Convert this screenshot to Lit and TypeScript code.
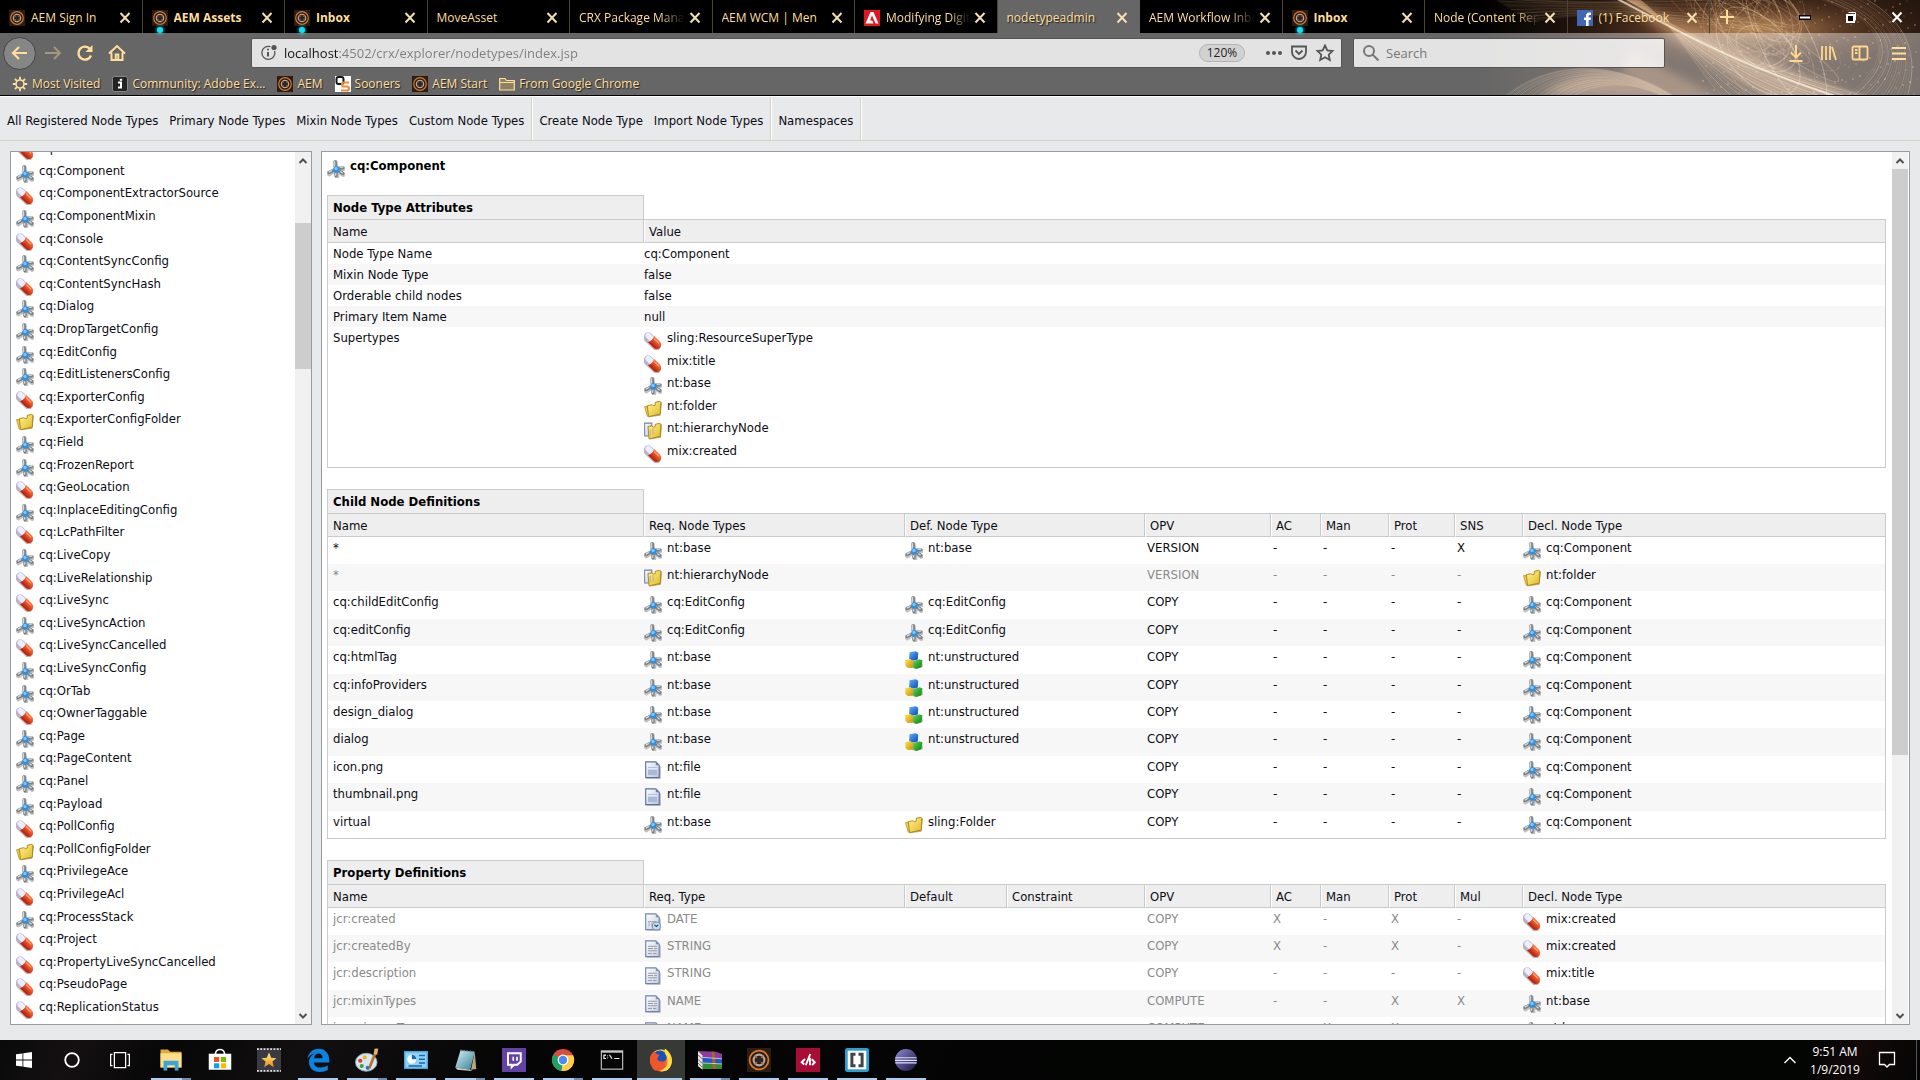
import { LitElement, html, svg, css, nothing, TemplateResult } from "lit";
import { customElement } from "lit/decorators.js";
import { classMap } from "lit/directives/class-map.js";

type Tab = { title: string; icon?: string; bold?: boolean; active?: boolean; fade?: boolean };
type Ref = { icon: string; name: string };

const TABS: Tab[] = [
  { title: "AEM Sign In", icon: "aem" },
  { title: "AEM Assets", icon: "aem", bold: true },
  { title: "Inbox", icon: "aem", bold: true },
  { title: "MoveAsset" },
  { title: "CRX Package Mana", fade: true },
  { title: "AEM WCM | Men" },
  { title: "Modifying Digit", icon: "adobe", fade: true },
  { title: "nodetypeadmin", active: true },
  { title: "AEM Workflow Inbo", fade: true },
  { title: "Inbox", icon: "aem", bold: true },
  { title: "Node (Content Rep", fade: true },
  { title: "(1) Facebook", icon: "facebook" },
];

const BOOKMARKS: Ref[] = [
  { icon: "gear", name: "Most Visited" },
  { icon: "jive", name: "Community: Adobe Ex..." },
  { icon: "aem", name: "AEM" },
  { icon: "sooners", name: "Sooners" },
  { icon: "aem", name: "AEM Start" },
  { icon: "bmfolder", name: "From Google Chrome" },
];

const MENUS = [
  ["All Registered Node Types", "Primary Node Types", "Mixin Node Types", "Custom Node Types"],
  ["Create Node Type", "Import Node Types"],
  ["Namespaces"],
];

const TYPES: [string, string][] = [
  ["pill", "Comment"], ["star", "Component"], ["pill", "ComponentExtractorSource"],
  ["star", "ComponentMixin"], ["pill", "Console"], ["star", "ContentSyncConfig"],
  ["pill", "ContentSyncHash"], ["star", "Dialog"], ["star", "DropTargetConfig"],
  ["star", "EditConfig"], ["star", "EditListenersConfig"], ["pill", "ExporterConfig"],
  ["folder", "ExporterConfigFolder"], ["star", "Field"], ["star", "FrozenReport"],
  ["pill", "GeoLocation"], ["star", "InplaceEditingConfig"], ["pill", "LcPathFilter"],
  ["star", "LiveCopy"], ["pill", "LiveRelationship"], ["pill", "LiveSync"],
  ["star", "LiveSyncAction"], ["pill", "LiveSyncCancelled"], ["star", "LiveSyncConfig"],
  ["star", "OrTab"], ["pill", "OwnerTaggable"], ["star", "Page"], ["star", "PageContent"],
  ["star", "Panel"], ["star", "Payload"], ["pill", "PollConfig"], ["folder", "PollConfigFolder"],
  ["star", "PrivilegeAce"], ["pill", "PrivilegeAcl"], ["star", "ProcessStack"],
  ["pill", "Project"], ["pill", "PropertyLiveSyncCancelled"], ["pill", "PseudoPage"],
  ["pill", "ReplicationStatus"],
];

const ATTRIBUTES: [string, string][] = [
  ["Node Type Name", "cq:Component"],
  ["Mixin Node Type", "false"],
  ["Orderable child nodes", "false"],
  ["Primary Item Name", "null"],
];

const SUPERTYPES: Ref[] = [
  { icon: "pill", name: "sling:ResourceSuperType" },
  { icon: "pill", name: "mix:title" },
  { icon: "star", name: "nt:base" },
  { icon: "folder", name: "nt:folder" },
  { icon: "hierarchy", name: "nt:hierarchyNode" },
  { icon: "pill", name: "mix:created" },
];

const BASE: Ref = { icon: "star", name: "nt:base" };
const EDIT: Ref = { icon: "star", name: "cq:EditConfig" };
const UNSTRUCTURED: Ref = { icon: "blocks", name: "nt:unstructured" };
const FILE: Ref = { icon: "file", name: "nt:file" };
const COMPONENT: Ref = { icon: "star", name: "cq:Component" };
const CREATED: Ref = { icon: "pill", name: "mix:created" };

type ChildDef = { name: string; req: Ref; def?: Ref; opv: string; sns: string; decl: Ref; inherited?: boolean };
const CHILDREN: ChildDef[] = [
  { name: "*", req: BASE, def: BASE, opv: "VERSION", sns: "X", decl: COMPONENT },
  { name: "*", req: { icon: "hierarchy", name: "nt:hierarchyNode" }, opv: "VERSION", sns: "-", decl: { icon: "folder", name: "nt:folder" }, inherited: true },
  { name: "cq:childEditConfig", req: EDIT, def: EDIT, opv: "COPY", sns: "-", decl: COMPONENT },
  { name: "cq:editConfig", req: EDIT, def: EDIT, opv: "COPY", sns: "-", decl: COMPONENT },
  { name: "cq:htmlTag", req: BASE, def: UNSTRUCTURED, opv: "COPY", sns: "-", decl: COMPONENT },
  { name: "cq:infoProviders", req: BASE, def: UNSTRUCTURED, opv: "COPY", sns: "-", decl: COMPONENT },
  { name: "design_dialog", req: BASE, def: UNSTRUCTURED, opv: "COPY", sns: "-", decl: COMPONENT },
  { name: "dialog", req: BASE, def: UNSTRUCTURED, opv: "COPY", sns: "-", decl: COMPONENT },
  { name: "icon.png", req: FILE, opv: "COPY", sns: "-", decl: COMPONENT },
  { name: "thumbnail.png", req: FILE, opv: "COPY", sns: "-", decl: COMPONENT },
  { name: "virtual", req: BASE, def: { icon: "folder", name: "sling:Folder" }, opv: "COPY", sns: "-", decl: COMPONENT },
];

type PropDef = { name: string; req: Ref; opv: string; flags: [string, string, string, string]; decl: Ref };
const PROPERTIES: PropDef[] = [
  { name: "jcr:created", req: { icon: "datefile", name: "DATE" }, opv: "COPY", flags: ["X", "-", "X", "-"], decl: CREATED },
  { name: "jcr:createdBy", req: { icon: "textfile", name: "STRING" }, opv: "COPY", flags: ["X", "-", "X", "-"], decl: CREATED },
  { name: "jcr:description", req: { icon: "textfile", name: "STRING" }, opv: "COPY", flags: ["-", "-", "-", "-"], decl: { icon: "pill", name: "mix:title" } },
  { name: "jcr:mixinTypes", req: { icon: "textfile", name: "NAME" }, opv: "COMPUTE", flags: ["-", "-", "X", "X"], decl: BASE },
  { name: "jcr:primaryType", req: { icon: "textfile", name: "NAME" }, opv: "COMPUTE", flags: ["-", "X", "X", "-"], decl: BASE },
];

type Task = { icon: string; label: string; open?: boolean; stacked?: boolean; active?: boolean };
const TASKS: Task[] = [
  { icon: "explorer", label: "File Explorer", open: true, stacked: true },
  { icon: "store", label: "Microsoft Store" },
  { icon: "movie", label: "Movie Maker" },
  { icon: "edge", label: "Microsoft Edge", open: true },
  { icon: "paint", label: "Paint", open: true, stacked: true },
  { icon: "control", label: "Control Panel", open: true },
  { icon: "notepad", label: "Notepad", open: true, stacked: true },
  { icon: "twitch", label: "Twitch", open: true },
  { icon: "chrome", label: "Google Chrome", open: true, stacked: true },
  { icon: "cmd", label: "Command Prompt", open: true },
  { icon: "firefox", label: "Firefox", open: true, active: true },
  { icon: "winrar", label: "WinRAR", open: true, stacked: true },
  { icon: "aem", label: "AEM", open: true },
  { icon: "crxde", label: "Code editor", open: true },
  { icon: "brackets", label: "Brackets", open: true },
  { icon: "eclipse", label: "Eclipse", open: true },
];

const icon = (name: string, cls = "ico") =>
  html`<svg class=${cls} viewBox="0 0 16 16" aria-hidden="true"><use href=${"#" + name}></use></svg>`;

const ref = (r?: Ref) =>
  r ? html`<span class="ref">${icon(r.icon)}<span>${r.name}</span></span>` : nothing;

const gloss = (id: string, a: string, b: string, x2 = 1, y2 = 1) => svg`
  <linearGradient id=${id} x1="0" y1="0" x2=${x2} y2=${y2}>
    <stop offset="0" stop-color=${a}></stop><stop offset="1" stop-color=${b}></stop>
  </linearGradient>`;

const SYMBOLS = html`<svg class="defs" width="0" height="0" aria-hidden="true">
  <defs>
    ${gloss("gRed", "#ff7a48", "#b41600", 0, 1)}
    ${gloss("gYellow", "#fff3a0", "#e3b81c")}
    ${gloss("gPaper", "#ffffff", "#b9c4dd")}
    ${gloss("gBlue", "#5cb0ff", "#0a48b4")}
    ${gloss("gGreen", "#5edc50", "#0a7a12")}
    ${gloss("gGold", "#ffe34a", "#c98f04")}
    ${gloss("gFox", "#ffd83a", "#e8322a", 0, 1)}
    ${gloss("gEclipse", "#8d8ad6", "#15113f")}
    ${gloss("gNote", "#d8f2f6", "#2f7f96", 1, 1)}
    ${gloss("gStar", "#fff08a", "#f08a12", 0, 1)}

    <symbol id="star" viewBox="0 0 16 16">
      <path d="M8 8.500 L2 12.500 M8.500 9 L9 14.500 M8 8 L14.500 13 M8.500 8.500 L14.500 7.800 M8 8 L7.500 2" stroke="#c4c2c0" stroke-width="4" stroke-linecap="round" fill="none"></path>
      <path d="M8 8 L1.800 11.200 M8 9 L8 14 M8 8 L14 12 M8.500 7.500 L14 7 M7.500 8 L7.300 1.700" stroke="#7d8285" stroke-width="3" stroke-linecap="round" fill="none"></path>
      <path d="M6.700 1.500 L6.700 6 M2 10.600 L5 8.800 M11.500 6.500 L14 6.200 M11 9.800 L13.500 11.400 M7.700 11 V13.500" stroke="#d4d9db" stroke-width="1.200" stroke-linecap="round"></path>
      <path d="M7 5 L9 5.500 L12 7 L10 8.500 L12.500 11 L9 10.500 L7.500 12 L6.500 9.500 L4 9.500 L6 7.500Z" fill="#2d8fe0"></path>
      <circle cx="8" cy="7.500" r="1.500" fill="#7cc6ff"></circle>
    </symbol>
    <symbol id="pill" viewBox="0 0 16 16">
      <g transform="translate(7.800 7.800) rotate(44)">
        <rect x="-8.500" y="-2.600" width="18" height="7.600" rx="3.800" fill="#a79a98" opacity=".75"></rect>
        <rect x="-9.300" y="-3.700" width="10" height="7.400" rx="3.700" fill="#b4b4da"></rect>
        <rect x="-8.600" y="-3" width="9" height="5" rx="2.500" fill="#eeeefa"></rect>
        <path d="M-2 -3.900 H5 A3.900 3.900 0 0 1 5 3.900 H-2 C-.8 1.500 -.8 -1.500 -2 -3.900Z" fill="url(#gRed)"></path>
        <path d="M0 -2.200 H5" stroke="#ff9c74" stroke-width="1.100" stroke-linecap="round"></path>
      </g>
    </symbol>
    <symbol id="folder" viewBox="0 0 16 16">
      <path d="M4 15.300 L14.500 14 L16 2.500 L14 1.500Z" fill="#8d855f" opacity=".7"></path>
      <path d="M.5 6 L2.500 5.500 L4.500 13.500 L3 14.500Z" fill="#f6dc50" stroke="#b08a10" stroke-width=".7"></path>
      <path d="M3 5 L7 4.200 L8.500 5 L10 4.500 L10 2 L14 1.200 L15 2 L14.500 12.500 L4 14.800Z" fill="url(#gYellow)" stroke="#a8820c" stroke-width=".8"></path>
    </symbol>
    <symbol id="hierarchy" viewBox="0 0 16 16">
      <path d="M5 15.600 L15 14 L16 2.500 L14 1.500Z" fill="#8d855f" opacity=".7"></path>
      <path d="M.6 1 H7 V12.500 H.6Z" fill="url(#gPaper)" stroke="#6f7fa6" stroke-width=".9"></path>
      <path d="M3.500 4 L7 3.500 L8.500 4.500 L10 4 L10 2 L14 1.200 L15 2 L14.500 12.800 L4.500 15Z" fill="url(#gYellow)" stroke="#a8820c" stroke-width=".8"></path>
      <path d="M5.500 6 V12 M8 5.500 V11" stroke="#b9b48a" stroke-width="1"></path>
    </symbol>
    <symbol id="blocks" viewBox="0 0 16 16">
      <path d="M1 8 L8 8 L15 8 L16 14 L11 16 L2 14.500Z" fill="#8b8b7b" opacity=".6"></path>
      <path d="M4 1 L9.500 .3 L11.800 1.500 L11.300 7.800 L6 8.300 L3.700 7Z" fill="url(#gBlue)"></path>
      <path d="M.3 8 L5 7.300 L7.500 9 L7 14.500 L2.500 15 L.3 13Z" fill="url(#gGold)"></path>
      <path d="M7.300 9.300 L13 7.300 L15.500 8.500 L14.500 14.500 L9.500 16 L7.300 14.200Z" fill="url(#gGreen)"></path>
    </symbol>
    <symbol id="sheet" viewBox="0 0 16 16">
      <path d="M2.500 2 H12 L15 5 V15.800 H2.500Z" fill="#8f8f95" opacity=".6"></path>
      <path d="M1.500 .8 H10.500 L13.500 3.800 V14.800 H1.500Z" fill="url(#gPaper)" stroke="#5d6f9c" stroke-width="1"></path>
      <path d="M10.500 .8 V3.800 H13.500Z" fill="#6d80b3"></path>
    </symbol>
    <symbol id="file" viewBox="0 0 16 16">
      <use href="#sheet"></use>
      <path d="M3.500 5.500 H11.500 V12.500 H3.500Z" fill="#a8b8d8"></path><path d="M3.500 7 H11.500" stroke="#fff"></path>
    </symbol>
    <symbol id="textfile" viewBox="0 0 16 16">
      <g opacity=".85"><use href="#sheet"></use>
      <path d="M3.500 5.500 H11.500 M3.500 7.500 H8 M9 7.500 H11.500 M3.500 9.500 H11.500 M3.500 12 H7 M8 12 H11" stroke="#8c8f99"></path></g>
    </symbol>
    <symbol id="datefile" viewBox="0 0 16 16">
      <g opacity=".85"><use href="#sheet"></use>
      <path d="M3.500 7.500 H11 M4.500 8 V12 M7 8 V12" stroke="#9aa2b4"></path></g>
      <circle cx="11" cy="11.500" r="3.600" fill="#bfe0f0" stroke="#7d93a6" stroke-width=".9"></circle>
      <path d="M9.300 10.500 L11 12 L12.700 10.500" stroke="#2c4256" fill="none"></path>
    </symbol>

    <symbol id="aem" viewBox="0 0 16 16">
      <rect width="16" height="16" fill="#2b1c14"></rect>
      <circle cx="8" cy="8" r="6.300" fill="none" stroke="#d9772a" stroke-width="1.200"></circle>
      <circle cx="8" cy="8" r="3.600" fill="none" stroke="#b9a79b" stroke-width="1.400"></circle>
      <path d="M5 5 L11 11 M11 5 L5 11" stroke="#8d7b70" stroke-width=".8"></path>
      <circle cx="8" cy="8" r="2" fill="#35241b"></circle>
    </symbol>
    <symbol id="adobe" viewBox="0 0 16 16">
      <rect width="16" height="16" fill="#e3161f"></rect>
      <path d="M1.500 13.500 L6.500 2 H9.500 L14.500 13.500 H11.500 L8 5.500 L6 10.500 H8.300 L9.500 13.500Z" fill="#fff"></path>
    </symbol>
    <symbol id="facebook" viewBox="0 0 16 16">
      <rect width="16" height="16" fill="#4267b2"></rect>
      <path d="M9 16 V10 H7 V7.500 H9 V6 C9 3.700 10.200 2.500 12.300 2.500 H14 V5 H12.800 C11.900 5 11.600 5.400 11.600 6.200 V7.500 H14 L13.600 10 H11.600 V16Z" fill="#fff"></path>
    </symbol>
    <symbol id="gear" viewBox="0 0 16 16">
      <circle cx="8" cy="8" r="4" fill="none" stroke="#ffdf9b" stroke-width="1.600"></circle>
      <path d="M8 .8 V4 M8 12 V15.200 M.8 8 H4 M12 8 H15.200 M2.900 2.900 L5.200 5.200 M10.800 10.800 L13.100 13.100 M13.100 2.900 L10.800 5.200 M5.200 10.800 L2.900 13.100" stroke="#ffdf9b" stroke-width="1.800"></path>
    </symbol>
    <symbol id="jive" viewBox="0 0 16 16">
      <rect x=".5" y=".5" width="15" height="15" rx="2" fill="#222" stroke="#888"></rect>
      <path d="M6 6.500 H9 V11.500 H6" stroke="#fff" stroke-width="2" fill="none"></path><rect x="7.800" y="2.800" width="2.400" height="2" fill="#fff"></rect>
    </symbol>
    <symbol id="sooners" viewBox="0 0 16 16">
      <rect width="16" height="16" fill="#fff"></rect>
      <rect x="1.500" y="1" width="7" height="7" rx="2" fill="none" stroke="#151515" stroke-width="2"></rect>
      <path d="M14 6.500 H8.500 C6.500 6.500 6.500 10.500 8.500 10.500 H12 C14.500 10.500 14.500 14.500 12 14.500 H6" fill="none" stroke="#f0883a" stroke-width="2.200"></path>
    </symbol>
    <symbol id="bmfolder" viewBox="0 0 16 16">
      <path d="M.7 2.500 H6 L7.500 4.500 H15.300 V14 H.7Z M.7 6.500 H15.300" fill="#8c8062" stroke="#ffdf9b" stroke-width="1.200"></path>
    </symbol>

    <symbol id="windows" viewBox="0 0 16 16">
      <path d="M0 2.300 L6.500 1.400 V7.600 H0Z M7.300 1.300 L16 0 V7.600 H7.300Z M0 8.400 H6.500 V14.600 L0 13.700Z M7.300 8.400 H16 V16 L7.300 14.700Z" fill="#fff"></path>
    </symbol>
    <symbol id="cortana" viewBox="0 0 16 16"><circle cx="8" cy="8" r="6.800" fill="none" stroke="#fff" stroke-width="1.800"></circle></symbol>
    <symbol id="taskview" viewBox="0 0 16 16">
      <path d="M3.500 2 H12.500 V14 H3.500Z M2 3.500 H.5 V12.500 H2 M14 3.500 H15.500 V12.500 H14" fill="none" stroke="#fff"></path>
    </symbol>
    <symbol id="explorer" viewBox="0 0 16 16">
      <path d="M1 1 H6 L7.500 2.500 H15 V13 H1Z" fill="#e0a93a"></path><path d="M1 3.500 H15 V13 H1Z" fill="#ffe08a"></path>
      <path d="M3 15 V8.500 H13 V15 H10.500 V11.500 H5.500 V15Z" fill="#3aa5dc"></path>
    </symbol>
    <symbol id="store" viewBox="0 0 16 16">
      <path d="M5 4 C5 0 11 0 11 4" fill="none" stroke="#fff" stroke-width="1.100"></path><path d="M.5 3.800 H15.500 V14.500 H.5Z" fill="#fff"></path>
      <path d="M4 6 H7.500 V9.300 H4Z" fill="#f25022"></path><path d="M8.500 6 H12 V9.300 H8.500Z" fill="#7fba00"></path>
      <path d="M4 10.200 H7.500 V13.500 H4Z" fill="#00a4ef"></path><path d="M8.500 10.200 H12 V13.500 H8.500Z" fill="#ffb900"></path>
    </symbol>
    <symbol id="movie" viewBox="0 0 16 16">
      <rect width="16" height="16" fill="#3a3b42"></rect>
      <path d="M0 .7 H16 M0 15.300 H16" stroke="#ddd" stroke-width="1.200" stroke-dasharray="1.200 1"></path>
      <path d="M8 3 L9.500 6.500 L13 6.800 L10.300 9 L11.200 12.800 L8 10.700 L4.800 12.800 L5.700 9 L3 6.800 L6.500 6.500Z" fill="url(#gStar)"></path>
    </symbol>
    <symbol id="edge" viewBox="0 0 16 16">
      <path d="M1 7.300 C1.600 3 4.500 .5 8.500 .5 C13 .5 15.500 3.800 15.500 8 V9.600 H5.200 C5.400 12 7.400 13 9.800 13 C11.600 13 13.200 12.500 14.500 11.700 V14.700 C13 15.500 11.200 16 9.300 16 C4.800 16 2 13.200 2 9.500 C2 7 3.500 4.800 6 3.700 C4 3.800 2.200 5.200 1 7.300Z M5.400 6.800 H11 C11 4.900 10 3.700 8.400 3.700 C6.700 3.700 5.700 5 5.400 6.800Z" fill="#0a84e0" fill-rule="evenodd"></path>
    </symbol>
    <symbol id="paint" viewBox="0 0 16 16">
      <ellipse cx="7.500" cy="9.500" rx="7.200" ry="6" fill="#d8e6f2" stroke="#8fa8bd" stroke-width=".6"></ellipse>
      <circle cx="3.500" cy="8.500" r="1.400" fill="#d93a2b"></circle><circle cx="6.500" cy="6.300" r="1.400" fill="#f2b320"></circle>
      <circle cx="4.500" cy="12" r="1.400" fill="#3f9f3a"></circle><circle cx="8.500" cy="13.200" r="1.400" fill="#2f72c4"></circle>
      <path d="M13.500 3.500 L9.500 13.500" stroke="#b5702c" stroke-width="1.800"></path><path d="M12.500 4 L13 .5 L15.500 .3 L14.800 4.500Z" fill="#e5b076"></path>
    </symbol>
    <symbol id="control" viewBox="0 0 16 16">
      <rect x="0" y="2" width="16" height="12" fill="#4aa9e0"></rect><rect x="1" y="3" width="14" height="10" fill="#8fd2f5"></rect>
      <circle cx="5.200" cy="7.500" r="3" fill="#fff"></circle><path d="M5.200 7.500 V4.500 A3 3 0 0 1 8.200 7.500Z" fill="#1a68b0"></path>
      <path d="M10 5 H14 M10 7.500 H14 M10 10 H14 M3 12 H12" stroke="#1a68b0"></path>
    </symbol>
    <symbol id="notepad" viewBox="0 0 16 16">
      <path d="M5 1.500 L14.500 2.500 L11.500 14.500 L1.500 13Z" fill="url(#gNote)"></path><path d="M1.500 13 L11.500 14.500 L13 15.300 L3 14.500Z" fill="#d8d4c8"></path>
      <path d="M14.500 2.500 L15.500 14 L12 14.500Z" fill="#b8a77a"></path><path d="M5 1.500 L14.500 2.500" stroke="#777" stroke-dasharray="1 1"></path>
    </symbol>
    <symbol id="twitch" viewBox="0 0 16 16">
      <rect width="16" height="16" fill="#6441a4"></rect>
      <path d="M4 3.500 H12.500 V9 L10.200 11.200 H8 L6.400 12.800 V11.200 H4Z" fill="none" stroke="#fff" stroke-width="1.300"></path><path d="M7.500 5.800 V8.500 M10 5.800 V8.500" stroke="#fff" stroke-width="1.100"></path>
    </symbol>
    <symbol id="chrome" viewBox="0 0 16 16">
      <circle cx="8" cy="8" r="7.400" fill="#dd4b3e"></circle>
      <path d="M8 8 L1.600 4.300 A7.400 7.400 0 0 0 7 15.300Z" fill="#1da261"></path><path d="M8 8 L7 15.300 A7.400 7.400 0 0 0 14.700 4.800 L8 4.800Z" fill="#ffcd46"></path>
      <circle cx="8" cy="8" r="3.600" fill="#fff"></circle><circle cx="8" cy="8" r="2.800" fill="#4a8af4"></circle>
    </symbol>
    <symbol id="cmd" viewBox="0 0 16 16">
      <rect x=".9" y="1.900" width="14.200" height="12.200" fill="#050505" stroke="#b9b9b9" stroke-width=".8"></rect><path d="M.9 2.600 H15.100" stroke="#ddd"></path>
      <path d="M4 4.800 H2.600 V7 H4 M5 5 V5.500 M5 6.400 V6.900 M6.300 4.500 L8 7.200 M9.500 7 H13" stroke="#eee" stroke-width=".8" fill="none"></path>
    </symbol>
    <symbol id="firefox" viewBox="0 0 16 16">
      <circle cx="8" cy="8.300" r="7.300" fill="url(#gFox)"></circle>
      <circle cx="7.200" cy="6.200" r="4.600" fill="#1a4fc0"></circle>
      <path d="M1.300 4.500 C2 3.500 2.500 3 3.500 2.500 C4 3.500 5 4.200 7 4.500 L5.500 7 C5.800 9.500 9.500 9.500 11 8 C11.500 11 8.500 12.500 6 12 C8 14 12 13 13 10 L12 15 H4 C1 13 0 8 1.300 4.500Z" fill="#f0562a"></path>
      <path d="M10.500 .3 C16 3.500 16.800 11 12.500 14.500 C10.500 15.800 8 15.800 6.500 15.300 C11.500 14.500 14.500 9 10.800 4Z" fill="#ffdc46"></path>
    </symbol>
    <symbol id="winrar" viewBox="0 0 16 16">
      <path d="M0 2 L12 2.500 L16 4 V7 L3 6Z" fill="#8e3aa0"></path><path d="M0 6 L3 6 L16 7 V10.500 L3 10 L0 9Z" fill="#2757c4"></path><path d="M0 9.500 L3 10 L16 10.700 V14 L3 14 L0 12Z" fill="#2f8f32"></path>
      <path d="M0 2 L3 5 V14.500 L0 12Z" fill="#e9e4dc"></path><path d="M0 4.500 L3 7.500 M0 7.500 L3 10.500 M0 10 L3 13" stroke="#6a5a50" stroke-width=".6"></path>
      <path d="M9 2.500 L11 2.500 L12 14 H10Z" fill="#a8642a"></path><path d="M3 6.200 L16 7.200 M3 10 L16 10.600" stroke="#eee" stroke-width=".5"></path>
    </symbol>
    <symbol id="crxde" viewBox="0 0 16 16">
      <rect width="16" height="16" fill="#a90d35"></rect>
      <path d="M6 7.300 L3.800 9.500 L5.500 11 M9.500 4 L6.500 11.500 M9.300 6.500 V11.500 M10.500 7.500 L12.500 9.500 L10.700 11.300" stroke="#fff" stroke-width="1.300" fill="none"></path>
    </symbol>
    <symbol id="brackets" viewBox="0 0 16 16">
      <rect width="16" height="16" rx="1.500" fill="#2a9fd2"></rect><rect x="1.800" y="1.800" width="12.400" height="12.400" fill="#fff"></rect>
      <path d="M7 4.200 H4.600 V11.800 H7 M9 4.200 H11.400 V11.800 H9" stroke="#444" stroke-width="2" fill="none"></path>
    </symbol>
    <symbol id="eclipse" viewBox="0 0 16 16">
      <circle cx="8" cy="8" r="7.300" fill="url(#gEclipse)"></circle><path d="M.9 6.500 H15.100 M.7 8.200 H15.300 M.9 9.900 H15.100" stroke="#dcdcf5" stroke-width=".8"></path>
    </symbol>
  </defs>
</svg>`;

/** Glowing strands of the browser theme: fans of curves around a bright focus. */
function strands(): TemplateResult[] {
  const out: TemplateResult[] = [];
  const tones = ["#e9bf8c", "#a9744c", "#fff0cf", "#8a5a3a", "#caa078"];
  for (let i = 0; i < 46; i++) {
    const t = i / 45;
    const d = `M${120 + t * 30} ${-14 + t * 6} C${190 + t * 14} ${22 + t * 8} ${240 - t * 30} ${58 + t * 8} ${420 - t * 170} 104`;
    out.push(svg`<path d=${d} stroke=${tones[i % 5]} stroke-opacity=${0.14 + (i % 4) * 0.09}></path>`);
  }
  for (let i = 0; i < 22; i++) {
    const t = i / 21;
    const d = `M${10 + t * 40} ${-4 + t * 26} C${90 + t * 20} ${2 + t * 12} ${130} ${4 + t * 4} ${250 + t * 90} ${-6 + t * 50}`;
    out.push(svg`<path d=${d} stroke=${tones[(i + 3) % 5]} stroke-opacity=${0.08 + (i % 3) * 0.07}></path>`);
  }
  for (let i = 0; i < 46; i++) {
    const a = i * 0.37;
    const rx = 18 + (i % 9) * 7;
    const ry = 10 + (i % 7) * 5;
    out.push(svg`<ellipse cx=${272 + Math.cos(a) * 30} cy=${24 + Math.sin(a * 1.7) * 18} rx=${rx} ry=${ry}
      transform=${`rotate(${20 + ((i * 29) % 50)} 275 28)`} stroke=${tones[i % 5]} stroke-opacity=${0.12 + (i % 3) * 0.1}></ellipse>`);
  }
  for (let i = 0; i < 18; i++) {
    const t = i / 17;
    const d = `M${330 + t * 50} -4 C${410 + t * 30} ${20 + t * 6} ${420 + t * 16} ${60 + t * 10} ${360 + t * 66} 100`;
    out.push(svg`<path d=${d} stroke=${tones[i % 5]} stroke-opacity=${0.12 + (i % 3) * 0.08}></path>`);
  }
  for (let i = 0; i < 30; i++) {
    const t = i / 29;
    const d = `M${20 + t * 70} 100 C${70 + t * 40} ${56 + t * 24} ${140 + t * 20} ${60 + t * 20} ${200 - t * 12} 100`;
    out.push(svg`<path d=${d} stroke=${tones[(i + 1) % 5]} stroke-opacity=".24"></path>`);
  }
  for (let i = 0; i < 220; i++) {
    const x = 220 + ((i * 73) % 218);
    const y = (i * 41) % 96;
    out.push(svg`<circle cx=${x} cy=${y} r=".8" fill="#ffe2ae" stroke="none" opacity=${0.15 + (i % 5) * 0.1}></circle>`);
  }
  return out;
}

@customElement("app-root")
export class AppRoot extends LitElement {
  static styles = css`
    :host {
      display: flex;
      flex-direction: column;
      height: 100vh;
      overflow: hidden;
      background: #e7e9eb;
      color: #0c0c14;
      font: 13px/22px "DejaVu Sans Condensed", "DejaVu Sans", Tahoma, sans-serif;
    }
    * { box-sizing: border-box; }
    button, input { font: inherit; color: inherit; border: 0; margin: 0; padding: 0; background: none; }
    a { color: inherit; text-decoration: none; }
    h1, h2, ul { margin: 0; padding: 0; list-style: none; font-size: 13px; }
    .defs { position: absolute; }
    .ico { width: 18px; height: 18px; flex: none; }
    .ico16 { width: 16px; height: 16px; flex: none; display: block; }
    .ico20 { width: 20px; height: 20px; flex: none; display: block; }
    .ico24 { width: 24px; height: 24px; flex: none; display: block; }

    /* browser chrome */
    .chrome {
      position: relative;
      flex: none;
      background: #000;
      border-bottom: 1px solid #000;
      color: #ffdf9b;
      font-family: "Open Sans", "Noto Sans", sans-serif;
      font-size: 12px;
    }
    .theme { position: absolute; right: 0; top: 0; width: 440px; height: 100%; }
    .bar { position: relative; display: flex; align-items: center; }
    .tabs { height: 33px; }
    .tab {
      flex: 1 1 0;
      min-width: 0;
      height: 33px;
      display: flex;
      align-items: center;
      gap: 6px;
      padding: 2px 9px 0;
      border-right: 1px solid #4a4336;
      position: relative;
    }
    .tab.active { background: #666; border-color: transparent; text-shadow: 1px 1px 1px #222; }
    .tab.bold { font-weight: 700; }
    .tab.bold::after {
      content: "";
      position: absolute;
      left: 14px;
      bottom: 0;
      width: 6px;
      height: 6px;
      border-radius: 50%;
      background: #12dff0;
      box-shadow: 0 0 3px 1px #0a7f94;
    }
    .label { flex: 1; min-width: 0; overflow: hidden; white-space: nowrap; margin-right: -4px; }
    .label.fade { mask-image: linear-gradient(to right, #000 75%, transparent); }
    .close { width: 16px; height: 16px; flex: none; }
    .close svg { display: block; }
    .tabend { display: flex; align-items: center; justify-content: space-between; width: 210px; flex: none; padding: 0 14px 0 8px; color: #fff; }
    .wins { display: flex; gap: 28px; }
    .wins button, .tabend button { height: 18px; }
    .toolbars { position: relative; background: rgba(255, 255, 255, 0.4); }
    .nav { height: 40px; padding: 0 12px 0 3px; }
    .back {
      width: 33px;
      height: 33px;
      border-radius: 50%;
      background: #868686;
      border: 1px solid #444;
      display: grid;
      place-items: center;
    }
    .navbtns { display: flex; align-items: center; gap: 12px; width: 248px; }
    .navbtns .back { margin-right: -5px; }
    .navbtns svg, .right svg { display: block; }
    .field {
      height: 30px;
      display: flex;
      align-items: center;
      background: rgba(255, 255, 255, 0.82);
      border: 1px solid #555;
      border-radius: 2px;
      color: #555;
      font-size: 13px;
    }
    .urlbox { flex: 1; padding: 0 6px 0 8px; gap: 6px; }
    .url {
      flex: 1;
      min-width: 0;
      color: transparent;
      background: linear-gradient(to right, #111 54px, #7c7c7c 54px);
      background-clip: text;
      -webkit-background-clip: text;
    }
    .zoom {
      width: 46px;
      height: 18px;
      border: 1px solid #b3b3b3;
      border-radius: 9px;
      background: #d2d2d2;
      color: #222;
      font-size: 12px;
      line-height: 14px;
      margin-right: 14px;
    }
    .urlbox button svg { display: block; }
    .search { width: 312px; margin: 0 122px 0 11px; padding: 0 8px; gap: 6px; }
    .search input { flex: 1; min-width: 0; }
    .search input::placeholder { color: #777; opacity: 1; }
    .right { display: flex; align-items: center; gap: 14px; }
    .split { width: 1px; height: 28px; background: #94816a; margin: 0 -4px; }
    .marks { height: 22px; padding: 0 0 0 12px; gap: 12px; text-shadow: 1px 1px 1px #222; }
    .mark { display: flex; align-items: center; gap: 4px; line-height: 22px; }

    /* explorer toolbar */
    .menu { flex: none; height: 45px; display: flex; border-bottom: 1px solid #d5d1c6; border-top: 1px solid #fff; }
    .group { display: flex; align-items: center; gap: 11px; padding: 4px 7px 0; border-right: 1px solid #d5d1c6; box-shadow: 1px 0 0 #fff; }

    /* panes */
    .panes { flex: 1; min-height: 0; display: flex; gap: 9px; padding: 10px 10px 15px; }
    .pane { background: #fff; border: 1px solid #999c9f; display: flex; min-height: 0; overflow: hidden; }
    .side { width: 302px; flex: none; }
    .main { flex: 1; min-width: 0; }
    .scrollbar { width: 16px; flex: none; background: #f1f1f1; display: flex; flex-direction: column; align-items: center; }
    .main .scrollbar { margin-right: 1px; }
    .scrollbar svg { flex: none; height: 17px; width: 16px; }
    .track { flex: 1; width: 100%; display: flex; flex-direction: column; }
    .thumb { background: #cdcdcd; }
    .side .thumb { flex: 146; }
    .side .pre { flex: 54; }
    .side .post { flex: 638; }
    .main .thumb { flex: 586; }
    .main .post { flex: 252; }
    .types { flex: 1; min-width: 0; margin-top: -15px; padding-left: 5px; }
    .types li { height: 23px; overflow: visible; }
    .types li:nth-child(5n + 2), .types li:nth-child(5n) { height: 22px; }
    .ref { display: flex; gap: 5px; line-height: 22px; color: #0c0c14; white-space: nowrap; }
    .ref.dim, .dim { color: #8a8a8a; }
    .ref .ico { margin-top: 5px; }

    .content { flex: 1; min-width: 0; padding: 3px 6px 0 5px; }
    h1 .ref { font-weight: 700; color: #000; }
    h1 { height: 40px; }
    section { margin-bottom: 21px; }
    h2 { width: 317px; height: 24px; line-height: 23px; padding: 0 5px; background: #eee; border: 1px solid #c9cacb; border-bottom: 0; color: #000; }
    table { width: 100%; table-layout: fixed; border-spacing: 0; border: 1px solid #c9cacb; }
    th {
      height: 23px;
      line-height: 21px;
      padding: 1px 0 0 4px;
      font-weight: 400;
      text-align: left;
      background: #eee;
      border-right: 1px solid #c9cacb;
      border-left: 1px solid #fff;
      border-bottom: 1px solid #c9cacb;
    }
    th:first-child { border-left: 0; padding-left: 5px; }
    th:last-child { border-right: 0; }
    td { padding: 0 0 0 2px; height: 27px; vertical-align: top; overflow: hidden; white-space: nowrap; }
    td:first-child { padding-left: 5px; }
    td.reft { padding-left: 0; }
    tbody tr:nth-child(even) td { background: #f7f7f7; }
    .defsrows tr:nth-child(5n + 3) td, .defsrows tr:nth-child(5n) td { height: 28px; }
    .attrs td { height: 21px; line-height: 22px; }
    .attrs td > .line { height: 21px; }
    .attrs .last td { padding-bottom: 5px; background: #fff; }
    .supers li { height: 22px; }
    .supers li:nth-child(odd) { height: 23px; }
    .c-name { width: 316px; }
    .c-req { width: 261px; }
    .c-def { width: 240px; }
    .c-half { width: 102px; }
    .c-con { width: 138px; }
    .c-opv { width: 126px; }
    .c-ac { width: 50px; }
    .c-man { width: 68px; }
    .c-prot { width: 66px; }
    .c-sns { width: 68px; }

    /* taskbar */
    .taskbar {
      flex: none;
      height: 40px;
      display: flex;
      color: #fff;
      background: linear-gradient(115deg, #0a0a0a 0, #141012 4%, #070707 9%, #120f10 16%, #040504 28%, #030503 94%, #130909 96%, #050505 100%);
      font: 12px/18px "Open Sans", "Noto Sans", sans-serif;
    }
    .sys { width: 48px; display: grid; place-items: center; }
    .tasks { display: flex; gap: 1px; flex: 1; padding-left: 3px; }
    .task { width: 48px; display: grid; place-items: center; position: relative; }
    .task.active { background: #373936; }
    .task.open::after { content: ""; position: absolute; left: 4px; right: 4px; bottom: 0; height: 2px; background: #a9cdf3; }
    .task.active::after { left: 0; right: 3px; }
    .task.stacked::after { background: linear-gradient(to right, #a9cdf3 31px, #6f8fb0 31px); }
    .tray { display: flex; align-items: center; gap: 12px; padding-right: 3px; }
    .clock { text-align: center; line-height: 18px; width: 52px; margin-right: 5px; padding-top: 1px; white-space: nowrap; }
    .peek { width: 1px; height: 40px; background: #555; margin-left: 8px; }
  `;

  private renderTab(t: Tab) {
    return html`<div class=${classMap({ tab: true, active: !!t.active, bold: !!t.bold })} role="tab" aria-selected=${t.active ? "true" : "false"}>
      ${t.icon ? icon(t.icon, "ico16") : nothing}
      <span class=${classMap({ label: true, fade: !!t.fade })}>${t.title}</span>
      <button class="close" aria-label=${"Close " + t.title}>
        <svg width="16" height="16" fill="none" stroke="#f3dfb0" stroke-width="2"><path d="M3.500 3 L12.500 12.500 M12.500 3 L3.500 12.500"></path></svg>
      </button>
    </div>`;
  }

  private renderChrome() {
    return html`<header class="chrome">
      <svg class="theme" viewBox="0 0 440 96" preserveAspectRatio="xMaxYMin slice" fill="none" aria-hidden="true">
        <defs>
          <radialGradient id="glow" cx=".62" cy=".3" r=".5">
            <stop offset="0" stop-color="#bd8e5c"></stop><stop offset=".4" stop-color="#5e3c26"></stop><stop offset="1" stop-color="#1a0e08" stop-opacity="0"></stop>
          </radialGradient>
          <linearGradient id="floor" x1="0" y1="0" x2="1" y2="0">
            <stop offset="0" stop-color="#3a2618" stop-opacity="0"></stop><stop offset=".3" stop-color="#2c1b11"></stop><stop offset=".6" stop-color="#4a3020"></stop><stop offset="1" stop-color="#2e1c12"></stop>
          </linearGradient>
          <filter id="haze" x="-20%" y="-20%" width="140%" height="140%"><feGaussianBlur stdDeviation="5"></feGaussianBlur></filter>
        </defs>
        <rect width="440" height="96" fill="url(#floor)" opacity=".8"></rect>
        <rect width="440" height="96" fill="url(#glow)"></rect>
        <g filter="url(#haze)">
          <path d="M130 -6 L200 20 L390 104 L300 104 L180 30Z" fill="#c89a72" opacity=".6"></path>
          <path d="M150 50 L250 104 L190 104 L140 70Z" fill="#9a6e50" opacity=".6"></path>
          <path d="M60 96 C100 66 140 66 190 100Z" fill="#a87c5c" opacity=".7"></path>
        </g>
        ${strands()}
        <path d="M128 -6 C190 26 250 64 380 104" stroke="#fff2d6" stroke-width="2" opacity=".7"></path>
      </svg>
      <div class="bar tabs" role="tablist">
        ${TABS.map((t) => this.renderTab(t))}
        <div class="tabend">
          <button aria-label="New tab"><svg width="18" height="18" stroke="#ffdf9b" stroke-width="2"><path d="M9 2 V16 M2 9 H16"></path></svg></button>
          <div class="wins">
            <button aria-label="Minimize"><svg width="18" height="18"><path d="M3 9.500 H15" stroke="#000" stroke-width="5"></path><path d="M4 9.500 H14" stroke="#fff" stroke-width="2"></path></svg></button>
            <button aria-label="Restore"><svg width="18" height="18" fill="none"><path d="M6.500 4.500 H13.500 V12.500" stroke="#fff" stroke-width="1"></path><rect x="5" y="7" width="7" height="7" stroke="#fff" stroke-width="2" fill="#000"></rect></svg></button>
            <button aria-label="Close window"><svg width="18" height="18" stroke="#fff" stroke-width="2"><path d="M4.500 4.500 L13.500 14 M13.500 4.500 L4.500 14"></path></svg></button>
          </div>
        </div>
      </div>
      <div class="toolbars">
        <div class="bar nav">
          <div class="navbtns">
            <button class="back" aria-label="Back"><svg width="20" height="20" fill="none" stroke="#ffdf9b" stroke-width="2.200"><path d="M17 10 H3 M9 4 L3 10 L9 16"></path></svg></button>
            <button aria-label="Forward"><svg width="20" height="20" fill="none" stroke="#a59878" stroke-width="2"><path d="M2 10 H17 M11 4 L17 10 L11 16"></path></svg></button>
            <button aria-label="Reload"><svg width="20" height="20" fill="none" stroke="#ffdf9b" stroke-width="2.400"><path d="M16 12.500 A6.500 6.500 0 1 1 14.500 5.500"></path><path d="M17.500 2 V9 H10.500Z" fill="#ffdf9b" stroke="none"></path></svg></button>
            <button aria-label="Home"><svg width="20" height="20" fill="none" stroke="#ffdf9b" stroke-width="2"><path d="M2 10.500 L10 3 L18 10.500 M4.500 9.500 V17 H15.500 V9.500"></path><path d="M8.700 17 V11.500 H11.300 V17"></path></svg></button>
          </div>
          <div class="field urlbox">
            <svg width="18" height="18" fill="none" stroke="#555" stroke-width="1.300" aria-hidden="true"><path d="M10.500 2.700 A6.500 6.500 0 1 0 14.600 7"></path><path d="M8 8 V12.500" stroke-width="2"></path><circle cx="8" cy="5.500" r="1" fill="#555" stroke="none"></circle><circle cx="14" cy="3.500" r="2.600" fill="#555" stroke="none"></circle></svg>
            <input class="url" type="text" aria-label="Address" .value=${"localhost:4502/crx/explorer/nodetypes/index.jsp"} />
            <button class="zoom">120%</button>
            <button aria-label="Page actions"><svg width="18" height="18" fill="#555"><circle cx="3" cy="9" r="2"></circle><circle cx="9" cy="9" r="2"></circle><circle cx="15" cy="9" r="2"></circle></svg></button>
            <button aria-label="Save to Pocket"><svg width="20" height="18" fill="none" stroke="#555" stroke-width="1.800"><path d="M3 2.500 H17 V8 A7 7 0 0 1 3 8Z M6.500 6.500 L10 10 L13.500 6.500"></path></svg></button>
            <button aria-label="Bookmark this page"><svg width="20" height="18" fill="none" stroke="#555" stroke-width="1.800"><path d="M10 1.500 L12.300 6.500 L17.500 7 L13.700 10.700 L14.800 16 L10 13.300 L5.200 16 L6.300 10.700 L2.500 7 L7.700 6.500Z"></path></svg></button>
          </div>
          <div class="field search">
            <svg width="18" height="18" fill="none" stroke="#777" stroke-width="2" aria-hidden="true"><circle cx="7" cy="7" r="5"></circle><path d="M10.500 10.500 L16.500 16.500"></path></svg>
            <input type="search" placeholder="Search" aria-label="Search" />
          </div>
          <div class="right">
            <button aria-label="Downloads"><svg width="18" height="20" fill="none" stroke="#ffd98a" stroke-width="2"><path d="M9 2 V14 M4 9.500 L9 14.500 L14 9.500 M2.500 18 H15.500"></path></svg></button>
            <button aria-label="Library"><svg width="18" height="20" fill="none" stroke="#ffd98a" stroke-width="1.800"><path d="M3 3 V17 M7 3 V17 M11 3 V17 M13 4 L17 17"></path></svg></button>
            <button aria-label="Sidebars"><svg width="18" height="20" fill="none" stroke="#ffd98a" stroke-width="1.800"><rect x="1.500" y="3.500" width="15" height="13" rx="1.500"></rect><path d="M8.500 4 V16 M4 7 H6.500 M4 10 H6.500"></path></svg></button>
            <span class="split"></span>
            <button aria-label="Open menu"><svg width="18" height="20" stroke="#ffdf9b" stroke-width="2"><path d="M2 5 H16 M2 10.500 H16 M2 16 H16"></path></svg></button>
          </div>
        </div>
        <nav class="bar marks" aria-label="Bookmarks">
          ${BOOKMARKS.map((b) => html`<a class="mark" href="#">${icon(b.icon, "ico16")}<span>${b.name}</span></a>`)}
        </nav>
      </div>
    </header>`;
  }

  private scrollbar(hasPre: boolean) {
    return html`<div class="scrollbar" aria-hidden="true">
      <svg viewBox="0 0 16 17" fill="none" stroke="#505050" stroke-width="2"><path d="M4.500 11 L8 7.500 L11.500 11"></path></svg>
      <div class="track">${hasPre ? html`<div class="pre"></div>` : nothing}<div class="thumb"></div><div class="post"></div></div>
      <svg viewBox="0 0 16 17" fill="none" stroke="#505050" stroke-width="2"><path d="M4.500 7 L8 10.500 L11.500 7"></path></svg>
    </div>`;
  }

  private renderDetail() {
    return html`<div class="content">
      <h1>${ref(COMPONENT)}</h1>
      <section>
        <h2>Node Type Attributes</h2>
        <table class="attrs">
          <colgroup><col class="c-name" /><col /></colgroup>
          <thead><tr><th>Name</th><th>Value</th></tr></thead>
          <tbody>
            ${ATTRIBUTES.map(([k, v]) => html`<tr><td><div class="line">${k}</div></td><td class="reft"><div class="line">${v}</div></td></tr>`)}
            <tr class="last"><td>Supertypes</td><td class="reft"><ul class="supers">${SUPERTYPES.map((s) => html`<li>${ref(s)}</li>`)}</ul></td></tr>
          </tbody>
        </table>
      </section>
      <section>
        <h2>Child Node Definitions</h2>
        <table>
          <colgroup><col class="c-name" /><col class="c-req" /><col class="c-def" /><col class="c-opv" /><col class="c-ac" /><col class="c-man" /><col class="c-prot" /><col class="c-sns" /><col /></colgroup>
          <thead><tr>${["Name", "Req. Node Types", "Def. Node Type", "OPV", "AC", "Man", "Prot", "SNS", "Decl. Node Type"].map((h) => html`<th>${h}</th>`)}</tr></thead>
          <tbody class="defsrows">
            ${CHILDREN.map((c) => html`<tr class=${c.inherited ? "dim" : ""}>
              <td>${c.name}</td><td class="reft">${ref(c.req)}</td><td class="reft">${ref(c.def)}</td><td>${c.opv}</td>
              <td>-</td><td>-</td><td>-</td><td>${c.sns}</td><td class="reft">${ref(c.decl)}</td>
            </tr>`)}
          </tbody>
        </table>
      </section>
      <section>
        <h2>Property Definitions</h2>
        <table>
          <colgroup><col class="c-name" /><col class="c-req" /><col class="c-half" /><col class="c-con" /><col class="c-opv" /><col class="c-ac" /><col class="c-man" /><col class="c-prot" /><col class="c-sns" /><col /></colgroup>
          <thead><tr>${["Name", "Req. Type", "Default", "Constraint", "OPV", "AC", "Man", "Prot", "Mul", "Decl. Node Type"].map((h) => html`<th>${h}</th>`)}</tr></thead>
          <tbody class="defsrows">
            ${PROPERTIES.map((p) => html`<tr class="dim">
              <td>${p.name}</td><td class="reft"><span class="ref dim">${icon(p.req.icon)}<span>${p.req.name}</span></span></td><td></td><td></td><td>${p.opv}</td>
              ${p.flags.map((f) => html`<td>${f}</td>`)}<td class="reft">${ref(p.decl)}</td>
            </tr>`)}
          </tbody>
        </table>
      </section>
    </div>`;
  }

  render() {
    return html`${SYMBOLS}${this.renderChrome()}
      <nav class="menu" aria-label="Node types">
        ${MENUS.map((g) => html`<div class="group">${g.map((m) => html`<a href="#">${m}</a>`)}</div>`)}
      </nav>
      <main class="panes">
        <aside class="pane side">
          <ul class="types">
            ${TYPES.map(([i, n]) => html`<li><a href="#">${ref({ icon: i, name: "cq:" + n })}</a></li>`)}
          </ul>
          ${this.scrollbar(true)}
        </aside>
        <div class="pane main">${this.renderDetail()}${this.scrollbar(false)}</div>
      </main>
      <footer class="taskbar">
        <button class="sys" aria-label="Start">${icon("windows", "ico16")}</button>
        <button class="sys" aria-label="Cortana">${icon("cortana", "ico16")}</button>
        <button class="sys" aria-label="Task view">${icon("taskview", "ico20")}</button>
        <div class="tasks">
          ${TASKS.map((t) => html`<button class=${classMap({ task: true, open: !!t.open, stacked: !!t.stacked, active: !!t.active })} aria-label=${t.label}>${icon(t.icon, "ico24")}</button>`)}
        </div>
        <div class="tray">
          <svg width="14" height="14" fill="none" stroke="#fff" stroke-width="1.400" aria-hidden="true"><path d="M1.500 10 L7 4.500 L12.500 10"></path></svg>
          <div class="clock"><div>9:51 AM</div><div>1/9/2019</div></div>
          <svg width="18" height="18" fill="none" stroke="#fff" stroke-width="1.300" aria-hidden="true"><path d="M1.500 1.500 H16.500 V13.500 H11.500 L9 16 L6.500 13.500 H1.500Z"></path></svg>
          <span class="peek"></span>
        </div>
      </footer>`;
  }
}
